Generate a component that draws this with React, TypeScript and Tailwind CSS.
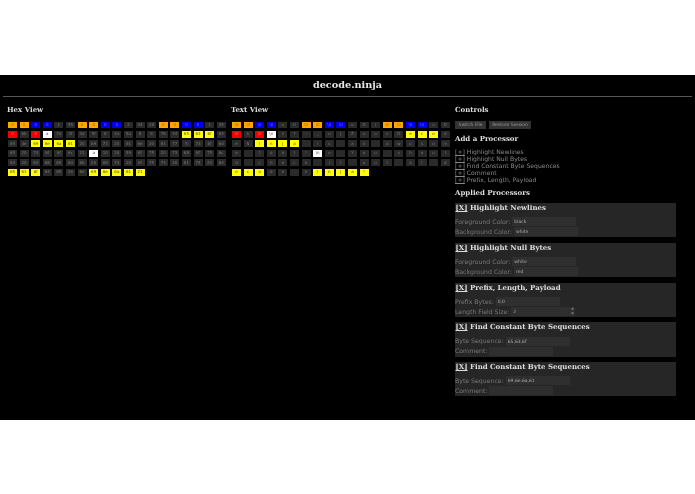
// decode.ninja — hex view, text view and processor panel
const HEX_ROWS = [
  "0 0 0 0 1 55 0 0 0 0 2 44 28 0 0 0 0 1 44",
  "0 6b 0 a 7a 3f 3a 5f 8 4a 5a 8 8 76 44 65 63 6f 64",
  "65 4e 69 6e 6a 61 20 69 73 20 61 6e 20 61 77 5 73 6f 6d",
  "65 20 74 6f 6f 6c 21 a 10 20 59 6f 75 20 73 68 6f 75 6c",
  "64 20 63 68 65 63 6b 20 69 74 20 6f 75 74 20 61 74 20 64",
  "65 63 6f 64 65 2e 6e 69 6e 6a 61 21",
].map((r) => r.split(" "));

// o = orange, b = blue, r = red, w = white, y = yellow, . = plain
const MARKS = [
  "oobb..oobb...oobb..",
  "r.rw...........yyy.",
  "..yyyy.............",
  ".......w...........",
  "...................",
  "yyy....yyyyy",
];

const CELL: Record<string, string> = {
  o: "bg-[#ffa500] text-[#8a6a20]",
  b: "bg-[#0000e6] text-[#6a6ae0]",
  r: "bg-[#f00000] text-[#f07070]",
  w: "bg-white text-[#555555]",
  y: "bg-[#ffff00] text-[#555520]",
  ".": "bg-[#2a2a2a] text-[#777777]",
};

function toText(hex: string) {
  const n = parseInt(hex, 16);
  if (n === 0) return "\\0";
  if (n === 10) return "\\n";
  if (n === 32) return "";
  if (n < 32) return "▫";
  return String.fromCharCode(n);
}

function ByteGrid({ text }: { text?: boolean }) {
  return (
    <div className="mt-[6.5px] ml-[1px] grid grid-cols-[repeat(19,9px)] gap-x-[2.6px] gap-y-[2.9px]">
      {HEX_ROWS.flatMap((row, y) =>
        row.map((b, x) => (
          <div
            key={y + "-" + x}
            className={"flex h-[6.6px] items-center justify-center overflow-hidden text-[4px] leading-none " + CELL[MARKS[y][x]]}
          >
            {text ? toText(b) : b}
          </div>
        )),
      )}
    </div>
  );
}

function Heading({ children }: { children: React.ReactNode }) {
  return <h2 className="font-['DejaVu_Serif'] text-[7px] leading-[10px] font-bold text-[#dddddd]">{children}</h2>;
}

function Field({ label, value, spin }: { label: string; value?: string; spin?: boolean }) {
  return (
    <div className="flex h-[9.9px] items-center text-[6.2px] text-[#777777]">
      <span className="mr-[2px] whitespace-nowrap">{label}:</span>
      <div className="flex h-[9px] w-[64px] items-center bg-[#2f2f2f]">
        <input
          readOnly
          defaultValue={value}
          className="h-full min-w-0 flex-1 bg-transparent pl-[2px] font-['DejaVu_Sans'] text-[4.5px] text-[#aaaaaa] outline-none"
        />
        {spin && (
          <svg width="3" height="8" viewBox="0 0 3 8" className="mr-[1px] shrink-0" fill="#888888">
            <path d="M1.5 0.5L3 2.5H0Z" />
            <path d="M1.5 7.5L0 5.5H3Z" />
          </svg>
        )}
      </div>
    </div>
  );
}

function Panel({ title, children }: { title: string; children: React.ReactNode }) {
  return (
    <div className="h-[34.3px] w-[221px] bg-[#262626]">
      <h3 className="h-[13.8px] pl-[0.5px] font-['DejaVu_Serif'] text-[7px] leading-[9px] font-bold text-[#dddddd]">
        <span className="underline">[X]</span> {title}
      </h3>
      {children}
    </div>
  );
}

export default function App() {
  return (
    <div className="flex h-[494px] w-[695px] flex-col bg-white font-['DejaVu_Sans'] will-change-transform">
      <div className="mt-[75px] h-[345px] bg-black">
        <h1 className="pt-[3px] text-center font-['DejaVu_Serif'] text-[9.7px] leading-[13px] font-bold text-[#e5e5e5]">
          decode.ninja
        </h1>
        <div className="mx-[3px] mt-[5px] h-[1px] bg-[#555555]" />
        <div className="mt-[8px] flex">
          <section className="ml-[7px] w-[224px]">
            <Heading>Hex View</Heading>
            <ByteGrid />
          </section>
          <section className="w-[224px]">
            <Heading>Text View</Heading>
            <ByteGrid text />
          </section>
          <section className="w-[221px]">
            <Heading>Controls</Heading>
            <div className="mt-[6px] flex gap-[3px]">
              <button className="h-[8px] w-[31px] bg-[#333333] text-[4.5px] leading-none text-[#999999]">Switch File</button>
              <button className="h-[8px] w-[42px] bg-[#333333] text-[4.5px] leading-none text-[#999999]">Restore Session</button>
            </div>
            <div className="mt-[5px]">
              <Heading>Add a Processor</Heading>
            </div>
            <ul className="mt-[4px] text-[6.1px] leading-[7px] text-[#888888]">
              {["Highlight Newlines", "Highlight Null Bytes", "Find Constant Byte Sequences", "Comment", "Prefix, Length, Payload"].map((p) => (
                <li key={p}>
                  <span className="underline">[+]</span> {p}
                </li>
              ))}
            </ul>
            <div className="mt-[5px]">
              <Heading>Applied Processors</Heading>
            </div>
            <div className="mt-[5px] flex flex-col gap-[5.5px]">
              <Panel title="Highlight Newlines">
                <Field label="Foreground Color" value="black" />
                <Field label="Background Color" value="white" />
              </Panel>
              <Panel title="Highlight Null Bytes">
                <Field label="Foreground Color" value="white" />
                <Field label="Background Color" value="red" />
              </Panel>
              <Panel title="Prefix, Length, Payload">
                <Field label="Prefix Bytes" value="0,0" />
                <Field label="Length Field Size" value="2" spin />
              </Panel>
              <Panel title="Find Constant Byte Sequences">
                <Field label="Byte Sequence" value="65,63,6f" />
                <Field label="Comment" />
              </Panel>
              <Panel title="Find Constant Byte Sequences">
                <Field label="Byte Sequence" value="69,6e,6a,61" />
                <Field label="Comment" />
              </Panel>
            </div>
          </section>
        </div>
      </div>
    </div>
  );
}
